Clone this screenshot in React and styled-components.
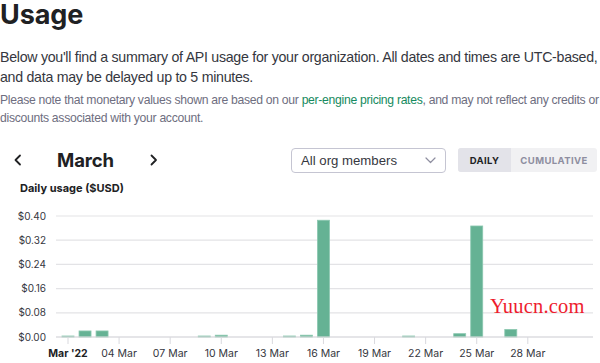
import styled, { createGlobalStyle } from 'styled-components'

const Global = createGlobalStyle`
  html, body {
    margin: 0;
    padding: 0;
    background: #fff;
  }
  body {
    font-family: Inter, "Noto Sans", sans-serif;
    color: #202123;
  }
`;

const Page = styled.div`
  width: 600px;
  height: 363px;
  overflow: hidden;
  position: relative;
`;

const Title = styled.h1`
  margin: 0;
  padding-top: 1px;
  font-size: 27px;
  line-height: 28px;
  font-weight: 700;
  letter-spacing: -0.1px;
`;

const Lead = styled.p`
  margin: 19px 0 0 0;
  font-family: "Liberation Sans", Arial, sans-serif;
  font-size: 14.2px;
  line-height: 19.5px;
  letter-spacing: -0.28px;
  white-space: nowrap;
  color: #353740;
`;

const Note = styled.p`
  margin: 5px 0 0 0;
  font-family: "Liberation Sans", Arial, sans-serif;
  font-size: 12.2px;
  line-height: 17.5px;
  letter-spacing: -0.3px;
  white-space: nowrap;
  color: #6e6e80;

  a {
    color: #168a60;
    text-decoration: none;
  }
`;

const Controls = styled.div`
  display: flex;
  align-items: center;
  margin-top: 21px;
  padding-right: 3px;
  height: 24px;
`;

const Chevron = styled.button`
  display: flex;
  align-items: center;
  justify-content: center;
  width: 8px;
  height: 24px;
  padding: 0;
  margin-left: ${p => p.$left || 0}px;
  border: none;
  background: none;
  color: #202123;
`;

const Month = styled.div`
  margin: 0 36px 0 35px;
  font-size: 18.5px;
  font-weight: 700;
  letter-spacing: -0.1px;
`;

const Select = styled.div`
  margin-left: auto;
  box-sizing: border-box;
  width: 155px;
  height: 25px;
  display: flex;
  align-items: center;
  justify-content: space-between;
  padding: 0 9px 0 9px;
  border: 1px solid #c5c5d2;
  border-radius: 4px;
  font-family: "Liberation Sans", Arial, sans-serif;
  font-size: 13.2px;
  color: #353740;
`;

const Toggle = styled.div`
  display: flex;
  margin-left: 12px;
  height: 24px;
  border-radius: 3px;
  overflow: hidden;
  background: #f1f1f3;
`;

const ToggleItem = styled.div`
  width: ${p => p.$w}px;
  display: flex;
  align-items: center;
  justify-content: center;
  font-size: 9.5px;
  font-weight: 700;
  letter-spacing: 0.4px;
  color: ${p => (p.$active ? '#202123' : '#8e8ea0')};
  background: ${p => (p.$active ? '#e3e3e9' : 'transparent')};
`;

const ChartTitle = styled.div`
  margin: 9px 0 0 20px;
  font-size: 11px;
  font-weight: 700;
  line-height: 14px;
  color: #202123;
`;

const Chart = styled.svg`
  display: block;
  margin-top: 6px;
`;

const Watermark = styled.div`
  position: absolute;
  left: 490px;
  top: 295px;
  font-family: "Liberation Serif", serif;
  font-size: 20.5px;
  color: #ee1c2e;
  letter-spacing: 0.2px;
`;

// daily usage in $ per day of march
const usage = {
  1: 0.001, 2: 0.02, 3: 0.02, 9: 0.001, 10: 0.006, 14: 0.002, 15: 0.006,
  16: 0.386, 21: 0.001, 24: 0.011, 25: 0.367, 27: 0.025,
};

const yOf = v => 136 - (v / 0.4) * 121;
const xOf = d => 68 + (d - 1) * 17.03;

const yTicks = [0.4, 0.32, 0.24, 0.16, 0.08, 0];
const xTicks = [
  [1, "Mar '22", true], [4, '04 Mar'], [7, '07 Mar'], [10, '10 Mar'], [13, '13 Mar'],
  [16, '16 Mar'], [19, '19 Mar'], [22, '22 Mar'], [25, '25 Mar'], [28, '28 Mar'],
];

function UsageChart() {
  return (
    <Chart width="600" height="163" viewBox="0 0 600 163">
      {yTicks.map(v => (
        <g key={v}>
          <line x1="56" x2="593" y1={yOf(v)} y2={yOf(v)} stroke="#e3e3e6" strokeWidth="1.2" />
          <text x="46" y={yOf(v) + 3.5} textAnchor="end" fontSize="10" fill="#353740"
            fontFamily="Inter, sans-serif">
            ${v.toFixed(2)}
          </text>
        </g>
      ))}
      {Object.entries(usage).map(([d, v]) => {
        const h = Math.max(1, 136 - yOf(v));
        return (
          <rect key={d} x={xOf(+d) - 6} y={136 - h} width="12" height={h}
            fill="#65b294" stroke="#8cc8b0" strokeWidth="0.8" />
        );
      })}
      <line x1="56" x2="593" y1="136" y2="136" stroke="#d9d9de" strokeWidth="1.2" />
      {xTicks.map(([d, label, bold]) => (
        <g key={d}>
          <line x1={xOf(d)} x2={xOf(d)} y1="136" y2="143" stroke="#d9d9de" strokeWidth="1" />
          <text x={xOf(d)} y="156" textAnchor="middle" fontSize="10.5"
            fontWeight={bold ? 700 : 400} fill={bold ? '#202123' : '#353740'}
            fontFamily="Inter, sans-serif">
            {label}
          </text>
        </g>
      ))}
    </Chart>
  );
}

export default function App() {
  return (
    <Page>
      <Global />
      <Title>Usage</Title>
      <Lead>
        Below you'll find a summary of API usage for your organization. All dates and times are UTC-based,
        <br />
        and data may be delayed up to 5 minutes.
      </Lead>
      <Note>
        Please note that monetary values shown are based on our <a href="#">per-engine pricing rates</a>, and
        may not reflect any credits or
        <br />
        discounts associated with your account.
      </Note>
      <Controls>
        <Chevron $left={14}>
          <svg width="8" height="12" viewBox="0 0 8 12">
            <polyline points="6,1.5 1.5,6 6,10.5" fill="none" stroke="currentColor" strokeWidth="1.8"
              strokeLinecap="round" strokeLinejoin="round" />
          </svg>
        </Chevron>
        <Month>March</Month>
        <Chevron>
          <svg width="8" height="12" viewBox="0 0 8 12">
            <polyline points="1.5,1.5 6,6 1.5,10.5" fill="none" stroke="currentColor" strokeWidth="1.8"
              strokeLinecap="round" strokeLinejoin="round" />
          </svg>
        </Chevron>
        <Select>
          <span>All org members</span>
          <svg width="11" height="7" viewBox="0 0 11 7">
            <polyline points="1,1 5.5,5.5 10,1" fill="none" stroke="#8e8ea0" strokeWidth="1.2"
              strokeLinecap="round" strokeLinejoin="round" />
          </svg>
        </Select>
        <Toggle>
          <ToggleItem $w={53} $active>DAILY</ToggleItem>
          <ToggleItem $w={86}>CUMULATIVE</ToggleItem>
        </Toggle>
      </Controls>
      <ChartTitle>Daily usage ($USD)</ChartTitle>
      <UsageChart />
      <Watermark>Yuucn.com</Watermark>
    </Page>
  );
}
